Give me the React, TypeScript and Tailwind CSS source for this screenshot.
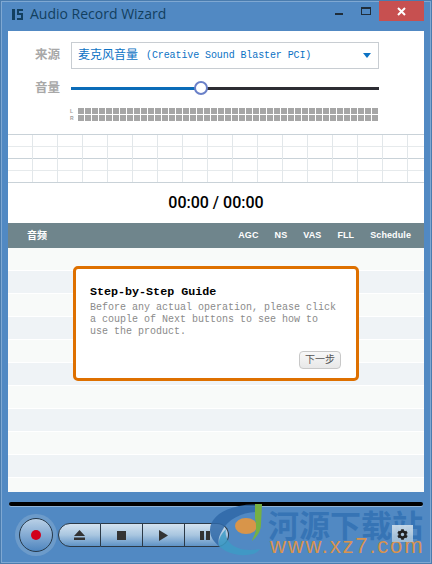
import type { ReactNode } from "react";
import { FaCog } from "react-icons/fa";

const MONO = "font-['Liberation_Mono','Noto_Sans_CJK_SC',monospace]";
const SANS = "font-['Liberation_Sans','Noto_Sans_CJK_SC',sans-serif]";

const COLUMNS = ["AGC", "NS", "VAS", "FLL", "Schedule"];
const ROW_COUNT = 11;

function MeterRow() {
  return (
    <div className="flex gap-px">
      {Array.from({ length: 43 }).map((_, i) => (
        <div key={i} className="h-[6px] w-[6px] shrink-0 bg-[#a6a6a6]" />
      ))}
    </div>
  );
}

function WaveGrid() {
  return (
    <div className="flex h-[49px] shrink-0 overflow-hidden border-y border-[#c9d2d8] bg-white">
      {Array.from({ length: 17 }).map((_, i) => (
        <div key={i} className="flex w-[25px] shrink-0 flex-col border-r border-[#e2e7ea]">
          <div className="h-[12px] border-b border-[#e6eaec]" />
          <div className="h-[12px] border-b border-[#c9d2d8]" />
          <div className="h-[12px] border-b border-[#e6eaec]" />
          <div className="flex-1" />
        </div>
      ))}
    </div>
  );
}

function TransportButton({ children, className }: { children: ReactNode; className: string }) {
  return (
    <div
      className={`flex h-[24px] items-center justify-center border-y border-r border-[#2b3a48] bg-gradient-to-b from-[#d3e2ef] via-[#a9c6e0] to-[#5f93c6] ${className}`}
    >
      {children}
    </div>
  );
}

function Watermark() {
  return (
    <div className="absolute left-[208px] top-[10px] h-[62px] w-[224px]">
      <svg className="absolute left-0 top-0" width="60" height="56" viewBox="0 0 60 56">
        <path d="M54 3C30 0 2 10 2 28c0 7 4 12 9 16 -1-4-1-9 3-15C20 17 34 10 50 10z" fill="#2f69a8" opacity="0.85" />
        <path d="M11 44c8 8 22 11 34 8 3-1 6-3 7-5-12 2-24 1-31-7-3-4-4-8-3-13-5 5-8 11-7 17z" fill="#3d9bc6" opacity="0.85" />
        <ellipse cx="38" cy="24" rx="11" ry="8" fill="#d8954a" />
        <path d="M47 2h7l-1 20c0 7-4 13-9 17 1-4 4-7 4-13 0-4 0-6-1-9z" fill="#76b043" />
      </svg>
      <div className="absolute left-[60px] top-[12px] text-[31px] font-bold leading-[26px] whitespace-nowrap text-[#3674b5]">
        河源下载站
      </div>
      <div className="absolute left-[62px] top-[38px] text-[22px] leading-[12px] tracking-[1.8px] whitespace-nowrap text-[#d8934f]">
        www.xz7.com
      </div>
    </div>
  );
}

export default function App() {
  return (
    <div
      className={`relative flex h-[564px] w-[432px] flex-col overflow-hidden bg-[#5189c3] shadow-[inset_0_0_0_1px_#4a7cae,inset_0_0_0_2px_#7fa8d2] ${SANS}`}
    >
      <div className="flex h-[31px] shrink-0 items-start pl-[12px]">
        <svg className="mt-[9px]" width="11" height="11" viewBox="0 0 11 11" fill="#123f5f">
          <rect x="0" y="0" width="3" height="11" />
          <path d="M5 0h6v2H7v2h4v7H5V9h4V6H5z" />
        </svg>
        <span className="ml-[7px] mt-[4px] font-['Open_Sans',sans-serif] text-[14px] leading-[20px] text-[#123f5f]">
          Audio Record Wizard
        </span>
        <div className="ml-auto mr-[18px] mt-[13px] h-[2px] w-[8px] bg-[#1f2d3a]" />
        <div className="mr-[8px] mt-[7px] h-[8px] w-[10px] border border-t-2 border-[#1f2d3a]" />
        <div className="mr-[8px] mt-[1px] flex h-[20px] w-[45px] items-center justify-center bg-[#c75050]">
          <svg width="9" height="9" viewBox="0 0 9 9" stroke="white" strokeWidth="2">
            <path d="M1 1l7 7M8 1l-7 7" />
          </svg>
        </div>
      </div>

      <div className="mx-[8px] flex h-[461px] shrink-0 flex-col bg-white">
        <div className="h-[103px] shrink-0 pl-[27px] pr-[45px] pt-[11px]">
          <div className="flex items-center">
            <span className="w-[36px] text-[12.5px] font-bold text-[#a8a8a8]">来源</span>
            <div className="flex h-[27px] flex-1 items-center justify-between border border-[#c8cdd2] pl-[6px] pr-[7px] text-[#0b72c4]">
              <span className={`${MONO} flex items-center whitespace-pre text-[10px]`}>
                <span className="text-[12px]">麦克风音量</span>
                <span className="ml-[8px] w-[165px] tracking-[-0.1px]">(Creative Sound Blaster PCI)</span>
              </span>
              <svg width="8" height="5" viewBox="0 0 8 5" fill="#0b72c4">
                <path d="M0 0h8L4 5z" />
              </svg>
            </div>
          </div>
          <div className="mt-[12px] flex h-[14px] items-center">
            <span className="w-[36px] text-[12.5px] font-bold text-[#a8a8a8]">音量</span>
            <div className="relative flex h-[3px] flex-1">
              <div className="h-full w-[130px] bg-[#0b6cb8]" />
              <div className="h-full flex-1 bg-[#2d2d33]" />
              <div className="absolute left-[123px] top-[-5.5px] h-[14px] w-[14px] rounded-full border-2 border-[#6a80c8] bg-white" />
            </div>
          </div>
          <div className="ml-[35px] mt-[13px] flex">
            <div className="w-[8px] text-[5px] font-bold leading-[7px] text-[#a0a0a0]">
              <div>L</div>
              <div>R</div>
            </div>
            <div className="flex flex-col gap-px">
              <MeterRow />
              <MeterRow />
            </div>
          </div>
        </div>

        <WaveGrid />

        <div className="flex h-[40px] shrink-0 items-center justify-center font-['Roboto',sans-serif] text-[16px] font-medium text-black">
          00:00 / 00:00
        </div>

        <div className="flex h-[25px] shrink-0 items-center bg-[#6f858c] pl-[19px] pr-[13px] text-[9px] font-bold text-white">
          <span className="text-[10px]">音频</span>
          <div className="ml-auto flex gap-[16px] tracking-[0.1px]">
            {COLUMNS.map((c) => (
              <span key={c}>{c}</span>
            ))}
          </div>
        </div>

        <div className="relative flex-1 overflow-hidden">
          {Array.from({ length: ROW_COUNT }).map((_, i) => (
            <div key={i} className={`h-[23px] border-b border-white ${i % 2 === 0 ? "bg-[#f8faf9]" : "bg-[#eff3f6]"}`} />
          ))}
          <div className="absolute left-[65px] top-[18px] h-[115px] w-[286px] rounded-[5px] border-[3px] border-[#de7000] bg-white pl-[14px] pt-[16px]">
            <div className={`${MONO} text-[11.7px] font-bold leading-[14px] text-black`}>Step-by-Step Guide</div>
            <p className={`${MONO} mt-[3px] w-[250px] text-[10px] leading-[12px] text-[#8a8a8a]`}>
              Before any actual operation, please click a couple of Next buttons to see how to use the product.
            </p>
            <button className="absolute bottom-[9px] right-[15px] h-[18px] w-[42px] rounded-[4px] border border-[#c8c8c8] bg-gradient-to-b from-[#f8f8f8] to-[#e8e8e8] text-[10px] leading-none text-[#555]">
              下一步
            </button>
          </div>
        </div>
      </div>

      <div className="flex-1">
        <div className="ml-[9px] mr-[9px] mt-[10px] h-[4px] rounded-full bg-black shadow-[0_1px_0_#8fb4da]" />
        <div className="ml-[15px] mt-[8px] flex items-center">
          <div className="flex h-[42px] w-[42px] items-center justify-center rounded-full bg-[#6c9bca]">
            <div className="flex h-[34px] w-[34px] items-center justify-center rounded-full border border-[#26394a] bg-gradient-to-b from-[#b9d0e6] to-[#4f86bf]">
              <div className="h-[10px] w-[10px] rounded-full bg-[#d1001c]" />
            </div>
          </div>
          <div className="ml-[1px] flex">
            <TransportButton className="w-[43px] rounded-l-full border-l">
              <svg width="11" height="10" viewBox="0 0 11 10" fill="#333">
                <path d="M5.5 0L11 6H0zM0 7.5h11V10H0z" />
              </svg>
            </TransportButton>
            <TransportButton className="w-[42px]">
              <div className="h-[9px] w-[9px] bg-[#333]" />
            </TransportButton>
            <TransportButton className="w-[42px]">
              <svg width="9" height="11" viewBox="0 0 9 11" fill="#333">
                <path d="M0 0l9 5.5L0 11z" />
              </svg>
            </TransportButton>
            <TransportButton className="w-[44px] rounded-r-full pr-[4px]">
              <div className="flex gap-[2px]">
                <div className="h-[9px] w-[4px] bg-[#333]" />
                <div className="h-[9px] w-[4px] bg-[#333]" />
              </div>
            </TransportButton>
          </div>
        </div>
      </div>

      <div className="absolute bottom-0 left-0 h-[72px] w-[432px]">
        <Watermark />
        <div className="absolute left-[392px] top-[33px] flex h-[17px] w-[21px] items-center justify-center bg-gradient-to-b from-[#dbe6ee]/85 to-[#a9c3d8]/85 pt-[2px]">
          <FaCog size={11} color="#222" />
        </div>
      </div>
    </div>
  );
}
